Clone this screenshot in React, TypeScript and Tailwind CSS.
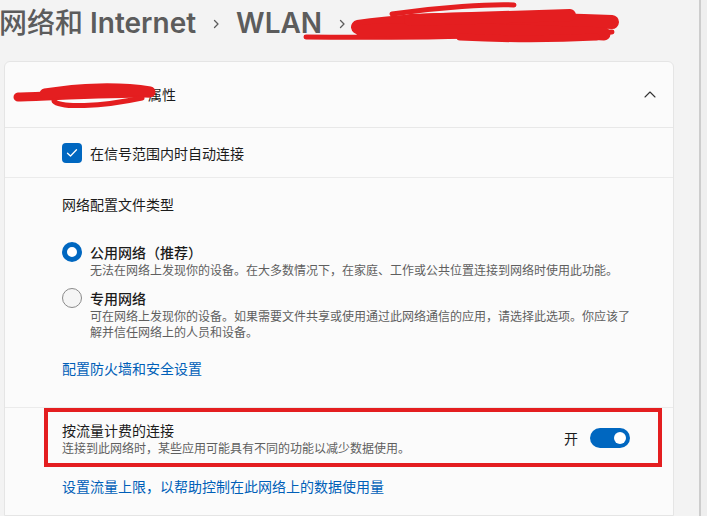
import React from "react";

const cjk = { fontFamily: '"Noto Sans CJK SC", "Noto Sans", sans-serif' };
const title = { fontFamily: '"Inter", "Noto Sans CJK SC", sans-serif' };

function Chevron() {
  return (
    <svg width="10" height="12" viewBox="0 0 10 12" className="mx-[15px] mt-[2px]">
      <path d="M3.5 2.5 L7 6 L3.5 9.5" fill="none" stroke="#5c5c5c" strokeWidth="1.3" strokeLinecap="round" strokeLinejoin="round" />
    </svg>
  );
}

export default function App() {
  return (
    <div className="relative w-[707px] h-[516px] overflow-hidden bg-[#f3f3f3] flex" style={cjk}>
      <div className="w-[699px] flex flex-col">
        {/* breadcrumb title */}
        <div className="h-[61px] shrink-0 flex items-start pt-[5px] ml-[-1px]">
          <div className="flex items-center h-[36px] text-[28px] leading-[36px] font-semibold text-[#5c5c5c]" style={title}>
            <span className="font-medium">网络和</span>
            <span>&nbsp;Internet</span>
            <Chevron />
            <span>WLAN</span>
            <Chevron />
          </div>
        </div>

        {/* card */}
        <div className="ml-[4px] w-[670px] flex-1 rounded-t-[6px] border border-[#e5e5e5] bg-[#fbfbfb] flex flex-col">
          <div className="h-[66px] shrink-0 flex items-center justify-between border-b border-[#e8e8e8] pl-[143px] pr-[17px]">
            <span className="text-[14px] text-[#1b1b1b]">属性</span>
            <svg width="12" height="7" viewBox="0 0 12 7">
              <path d="M1 6 L6 1 L11 6" fill="none" stroke="#333" strokeWidth="1.1" strokeLinecap="round" strokeLinejoin="round" />
            </svg>
          </div>

          <div className="h-[50px] shrink-0 flex items-center border-b border-[#ebebeb] pl-[57px]">
            <div className="w-[20px] h-[20px] rounded-[4px] bg-[#0067c0] flex items-center justify-center">
              <svg width="12" height="10" viewBox="0 0 12 10">
                <path d="M1.5 5.2 L4.5 8 L10.5 1.8" fill="none" stroke="#fff" strokeWidth="1.3" strokeLinecap="round" strokeLinejoin="round" />
              </svg>
            </div>
            <span className="ml-[8px] text-[14px] leading-[20px] text-[#1b1b1b]">在信号范围内时自动连接</span>
          </div>

          <div className="shrink-0 flex flex-col border-b border-[#ebebeb] pl-[57px] pt-[16px] pb-[29px]">
            <div className="text-[14px] leading-[20px] text-[#1b1b1b]">网络配置文件类型</div>

            <div className="mt-[28px] flex items-start">
              <div className="w-[20px] h-[20px] rounded-full border-[5px] border-[#0067c0] bg-white shrink-0" />
              <div className="ml-[8px] flex flex-col">
                <div className="text-[14px] leading-[20px] font-medium text-[#1b1b1b]">公用网络（推荐）</div>
                <div className="text-[12px] leading-[16px] text-[#5f5f5f] whitespace-nowrap">无法在网络上发现你的设备。在大多数情况下，在家庭、工作或公共位置连接到网络时使用此功能。</div>
              </div>
            </div>

            <div className="mt-[10px] flex items-start">
              <div className="w-[20px] h-[20px] rounded-full border border-[#8a8a8a] bg-[#f5f5f5] shrink-0" />
              <div className="ml-[8px] flex flex-col">
                <div className="text-[14px] leading-[20px] font-medium text-[#1b1b1b]">专用网络</div>
                <div className="text-[12px] leading-[16px] text-[#5f5f5f] whitespace-nowrap">
                  可在网络上发现你的设备。如果需要文件共享或使用通过此网络通信的应用，请选择此选项。你应该了
                  <br />
                  解并信任网络上的人员和设备。
                </div>
              </div>
            </div>

            <div className="mt-[18px] text-[14px] leading-[20px] text-[#005fb8]">配置防火墙和安全设置</div>
          </div>

          <div className="shrink-0 flex items-center justify-between pl-[57px] pr-[43px] py-[12px]">
            <div className="flex flex-col">
              <div className="text-[14px] leading-[20px] text-[#1b1b1b]">按流量计费的连接</div>
              <div className="text-[12px] leading-[16px] text-[#5f5f5f]">连接到此网络时，某些应用可能具有不同的功能以减少数据使用。</div>
            </div>
            <div className="flex items-center">
              <span className="text-[14px] leading-[20px] text-[#1b1b1b]">开</span>
              <div className="ml-[12px] w-[40px] h-[20px] rounded-full bg-[#0067c0] flex items-center justify-end pr-[4px]">
                <div className="w-[12px] h-[12px] rounded-full bg-white" />
              </div>
            </div>
          </div>

          <div className="mt-[8px] pl-[57px] text-[14px] leading-[20px] text-[#005fb8]">设置流量上限，以帮助控制在此网络上的数据使用量</div>
        </div>
      </div>

      {/* scrollbar strip */}
      <div className="w-[2px] bg-[#cdcdcd]" />
      <div className="flex-1 bg-[#efefef]" />

      {/* red annotation box */}
      <div className="absolute left-[44px] top-[408px] w-[618px] h-[59px] border-[4px] border-[#e41e20]" />

      {/* redaction scribbles */}
      <svg className="absolute left-0 top-0 pointer-events-none" width="707" height="516" viewBox="0 0 707 516">
        <g fill="none" stroke="#e41e20" strokeLinecap="round" strokeLinejoin="round">
          <path d="M306 37 C 380 38, 500 36, 612 32" strokeWidth="5" />
          <path d="M358 27 C 420 17, 520 18, 612 22" strokeWidth="14" />
          <path d="M362 31 C 430 27, 520 31, 604 34" strokeWidth="13" />
          <path d="M392 14 C 440 7, 490 4, 514 5" strokeWidth="5" />
          <path d="M410 20 L 570 15" strokeWidth="12" />
          <path d="M460 37 C 520 40, 560 39, 596 37" strokeWidth="7" />
          <path d="M18 97 C 50 96, 110 93, 148 93" strokeWidth="9" />
          <path d="M45 94 C 80 88, 120 87, 150 92" strokeWidth="11" />
          <path d="M54 101 C 60 108, 100 107, 142 98" strokeWidth="5" />
        </g>
      </svg>
    </div>
  );
}
